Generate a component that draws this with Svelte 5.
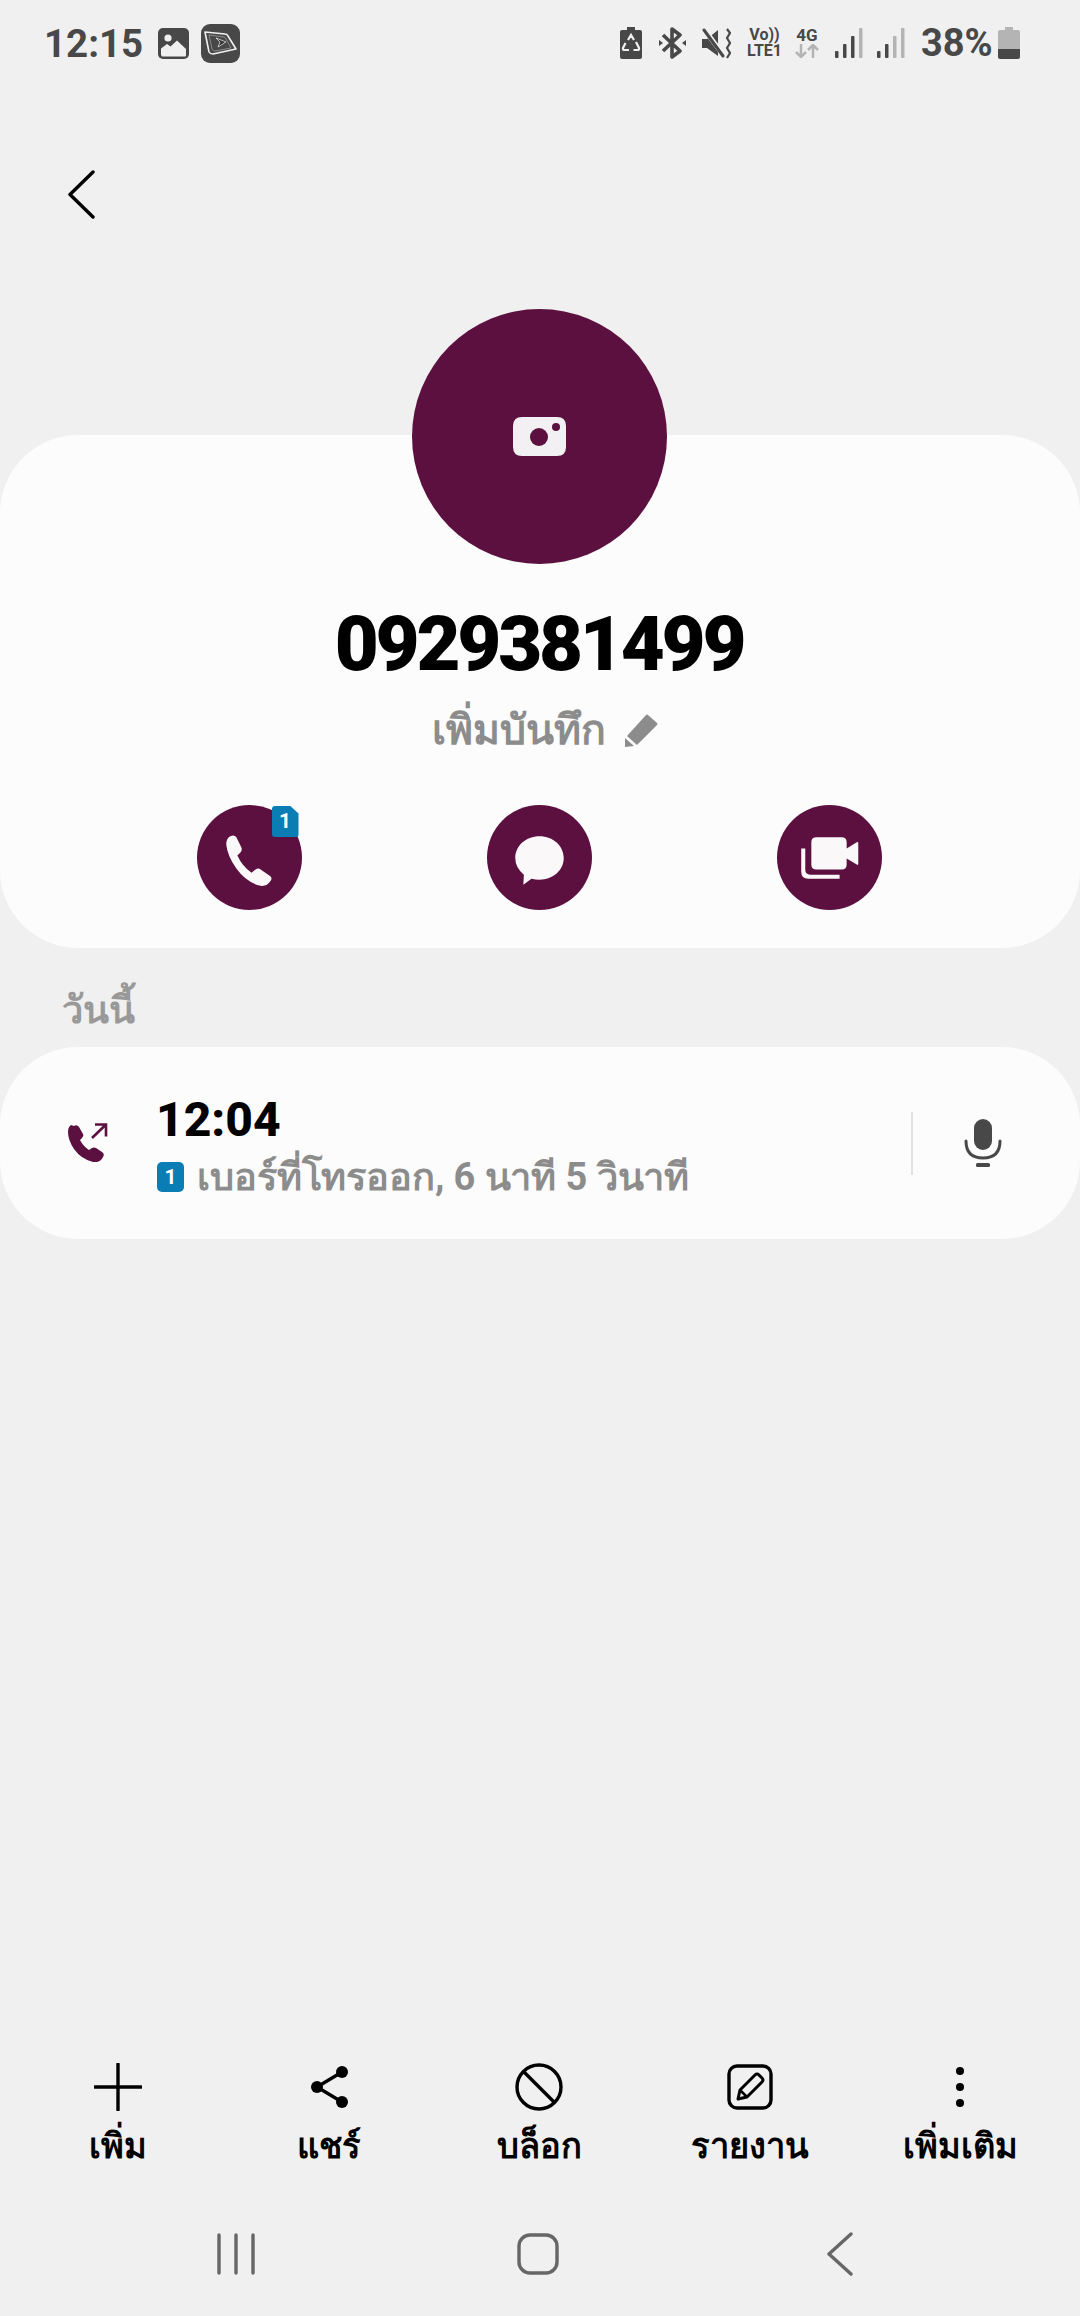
<script>
  const actions = ['phone', 'message', 'video'];
  const tools = [
    { id: 'add', label: 'เพิ่ม' },
    { id: 'share', label: 'แชร์' },
    { id: 'block', label: 'บล็อก' },
    { id: 'report', label: 'รายงาน' },
    { id: 'more', label: 'เพิ่มเติม' }
  ];
</script>

<div class="screen">
  <header class="status">
    <span class="clock">12:15</span>
    <svg class="notif-gallery" viewBox="0 0 31 31">
      <rect width="31" height="31" rx="5" fill="#484848" />
      <circle cx="10" cy="10" r="3.6" fill="#f0f0f0" />
      <path d="M3 27v-6.500l6 -4.500 3.500 2.500 6.500 -6 9 8.500v6.500q0 1 -1 1h-22.500q-1 0 -1 -1z" fill="#f0f0f0" />
    </svg>
    <svg class="notif-app" viewBox="0 0 39 39">
      <rect width="39" height="39" rx="9" fill="#484848" />
      <path d="M4 8l20 2q2 0 3 2l8 13 -23 5q-3 0 -4 -2z" fill="none" stroke="#f0f0f0" stroke-width="1.600" stroke-linejoin="round" />
      <path d="M8 11l15 2q1 0 2 2l5 9 -16 3q-2 0 -3 -2z" fill="none" stroke="#9a9a9a" stroke-width="0.800" />
      <path d="M15 14l10 4 -8 5 2 -5z" fill="#333" stroke="#f0f0f0" stroke-width="0.700" />
    </svg>

    <div class="status-right">
      <svg class="sys-batt" viewBox="0 0 22 32">
        <path d="M7 0h8v3h5q2 0 2 2v25q0 2 -2 2h-18q-2 0 -2 -2v-25q0 -2 2 -2h5z" fill="#484848" />
        <path d="M8 13l3 -5 3 5M16 15l3 6q.5 2 -1.500 2h-4M9 23h-4.500q-2 0 -1.500 -2l2.500 -5" fill="none" stroke="#f0f0f0" stroke-width="2.200" />
      </svg>
      <svg class="sys-bt" viewBox="0 0 27 32">
        <path d="M4 8l17 16 -8 6v-28l8 6 -17 16" fill="none" stroke="#484848" stroke-width="3.600" stroke-linejoin="round" />
        <path d="M0 13l4 3 -4 3zM27 13l-4 3 4 3z" fill="#484848" />
      </svg>
      <svg class="sys-mute" viewBox="0 0 29 32">
        <path d="M0 12h5l11 -9v26l-11 -8h-5z" fill="#484848" />
        <path d="M2 2l20 27" stroke="#f0f0f0" stroke-width="5" />
        <path d="M2 3l19 26" stroke="#484848" stroke-width="3" stroke-linecap="round" />
        <path d="M25 2l3 4 -3 5 3 5 -3 5 3 5 -3 5" fill="none" stroke="#484848" stroke-width="2.200" />
      </svg>
      <div class="volte"><span>Vo))</span><span>LTE1</span></div>
      <div class="net">
        <span>4G</span>
        <svg viewBox="0 0 24 14">
          <path d="M6 0v13M1 8l5 5 5 -5" fill="none" stroke="#b4b4b4" stroke-width="2.500" />
          <path d="M18 14v-13M13 6l5 -5 5 5" fill="none" stroke="#b4b4b4" stroke-width="2.500" />
        </svg>
      </div>
      <svg class="sys-signal" viewBox="0 0 28 32">
        <rect x="0" y="24" width="3.500" height="7" rx="1" fill="#484848" />
        <rect x="8" y="17" width="3.500" height="14" rx="1" fill="#484848" />
        <rect x="16" y="9" width="3.500" height="22" rx="1" fill="#484848" />
        <rect x="24" y="1" width="3.500" height="30" rx="1" fill="#b4b4b4" />
      </svg>
      <svg class="sys-signal second" viewBox="0 0 28 32">
        <rect x="0" y="24" width="3.500" height="7" rx="1" fill="#484848" />
        <rect x="8" y="17" width="3.500" height="14" rx="1" fill="#484848" />
        <rect x="16" y="9" width="3.500" height="22" rx="1" fill="#b4b4b4" />
        <rect x="24" y="1" width="3.500" height="30" rx="1" fill="#b4b4b4" />
      </svg>
      <span class="percent">38%</span>
      <svg class="sys-level" viewBox="0 0 22 32">
        <path d="M7 0h8v3h5q2 0 2 2v17h-22v-17q0 -2 2 -2h5z" fill="#b4b4b4" />
        <path d="M0 22h22v8q0 2 -2 2h-18q-2 0 -2 -2z" fill="#484848" />
      </svg>
    </div>
  </header>

  <div class="topbar">
    <svg class="back" viewBox="0 0 27 49">
      <path d="M25 2l-23 22.500 23 22.500" fill="none" stroke="#000" stroke-width="3.400" stroke-linecap="round" stroke-linejoin="round" />
    </svg>
  </div>

  <section class="profile card">
    <div class="avatar">
      <svg viewBox="0 0 53 39">
        <path d="M9 0h35q9 0 9 9v21q0 9 -9 9h-35q-9 0 -9 -9v-21q0 -9 9 -9z" fill="#f2f0f2" />
        <circle cx="26" cy="20" r="9" fill="#5c103f" />
        <circle cx="43" cy="10" r="4" fill="#5c103f" />
      </svg>
    </div>
    <h1 class="number">0929381499</h1>
    <div class="memo">
      <span>เพิ่มบันทึก</span>
      <svg viewBox="0 0 33 33">
        <path d="M23 1l9 8q1 1 0 2l-20 20 -10 -9 19 -21q1 -1 2 0z" fill="#8c8c8c" />
        <path d="M0 24l9 8 -9 1z" fill="#8c8c8c" />
      </svg>
    </div>
    <div class="actions">
      {#each actions as action}
        <div class="action">
          {#if action === 'phone'}
            <svg class="glyph" viewBox="0 0 104 104">
              <path d="M33 31q4 -2 6 1l5 10q1 3 -1 5l-3 3q5 11 14 17l4 -3q3 -2 5 0l9 6q3 2 1 5q-4 6 -10 5q-14 -3 -24 -17q-9 -13 -10 -24q0 -6 4 -8z" fill="#fbf8fa" />
            </svg>
            <span class="sim-tab">1</span>
          {:else if action === 'message'}
            <svg class="glyph" viewBox="0 0 104 104">
              <path d="M52 31c13.500 0 24 9.500 24 21.500s-10.500 21.500 -24 21.500q-4 0 -8 -1l-8 6 .5 -10q-8.500 -7 -8.500 -16.500c0 -12 10.500 -21.500 24 -21.500z" fill="#fbf8fa" />
            </svg>
          {:else}
            <svg class="glyph" viewBox="0 0 104 104">
              <path d="M24 43h4v21q0 5 5 5h29v4h-31q-7 0 -7 -7z" fill="#fbf8fa" />
              <path d="M39 32h25q5 0 5 5v6l10 -6q1.500 -1 1.500 1v20q0 2 -1.500 1l-10 -6v6q0 5 -5 5h-25q-5 0 -5 -5v-22q0 -5 5 -5z" fill="#fbf8fa" />
            </svg>
          {/if}
        </div>
      {/each}
    </div>
  </section>

  <h2 class="day">วันนี้</h2>

  <section class="log card">
    <svg class="call-out" viewBox="0 0 40 40">
      <path d="M6 4q3 -2 5 1l4 7q1 2 -1 4l-2 2q3 6 9 10l3 -2q2 -1 4 0l6 4q3 2 1 5q-3 6 -10 5q-12 -3 -19 -13q-6 -9 -6 -17q0 -5 3 -7z" fill="#5c103f" />
      <path d="M24 16l14 -13.500M27 2.500h11v12" fill="none" stroke="#5c103f" stroke-width="2.600" />
    </svg>
    <div class="log-text">
      <div class="log-time">12:04</div>
      <div class="log-sub">
        <span class="sim-chip">1</span>
        <span>เบอร์ที่โทรออก, 6 นาที 5 วินาที</span>
      </div>
    </div>
    <div class="divider"></div>
    <svg class="mic" viewBox="0 0 38 48">
      <rect x="10" y="0" width="18" height="31" rx="9" fill="#484848" />
      <path d="M2 22q0 17 17 17t17 -17" fill="none" stroke="#484848" stroke-width="3" stroke-linecap="round" />
      <rect x="12" y="44" width="14" height="4" rx="1.500" fill="#484848" />
    </svg>
  </section>

  <nav class="toolbar">
    {#each tools as tool}
      <div class="tool">
        <svg viewBox="0 0 48 48">
          {#if tool.id === 'add'}
            <path d="M24 1v46M1 24h46" stroke="#000" stroke-width="3.400" stroke-linecap="round" />
          {:else if tool.id === 'share'}
            <path d="M37 9l-25 15 25 15" fill="none" stroke="#000" stroke-width="3.400" />
            <circle cx="37" cy="9" r="6" />
            <circle cx="12" cy="24" r="6" />
            <circle cx="37" cy="39" r="6" />
          {:else if tool.id === 'block'}
            <circle cx="24" cy="24" r="22" fill="none" stroke="#000" stroke-width="3.400" />
            <path d="M8 8l32 32" stroke="#000" stroke-width="3.400" />
          {:else if tool.id === 'report'}
            <rect x="3" y="3" width="42" height="42" rx="8" fill="none" stroke="#000" stroke-width="3.400" />
            <path d="M12 36l2 -9 15 -15q2 -2 4 0l3 3q2 2 0 4l-15 15z" fill="none" stroke="#000" stroke-width="3" stroke-linejoin="round" />
            <path d="M14 27l7 7" stroke="#000" stroke-width="2.500" />
          {:else}
            <circle cx="24" cy="8" r="4" />
            <circle cx="24" cy="24" r="4" />
            <circle cx="24" cy="40" r="4" />
          {/if}
        </svg>
        <span>{tool.label}</span>
      </div>
    {/each}
  </nav>

  <footer class="navbar">
    <svg viewBox="0 0 38 42">
      <path d="M2 2v38M19 2v38M36 2v38" stroke="#666" stroke-width="3.400" stroke-linecap="round" />
    </svg>
    <svg viewBox="0 0 42 42">
      <rect x="2" y="2" width="38" height="38" rx="11" fill="none" stroke="#666" stroke-width="3.400" />
    </svg>
    <svg viewBox="0 0 26 44">
      <path d="M24 2l-22 20 22 20" fill="none" stroke="#666" stroke-width="3.400" stroke-linecap="round" stroke-linejoin="round" />
    </svg>
  </footer>
</div>

<style>
  :global(body) {
    margin: 0;
    background: #f0f0f0;
  }

  .screen {
    width: 1080px;
    height: 2316px;
    display: flex;
    flex-direction: column;
    background: #f0f0f0;
    font-family: Roboto, "Noto Sans", sans-serif;
    overflow: hidden;
  }

  /* status bar */
  .status {
    height: 87px;
    padding: 24px 60px 0 44px;
    box-sizing: border-box;
    display: flex;
    align-items: flex-start;
    color: #484848;
  }

  .clock {
    font-size: 38.5px;
    font-weight: 700;
    line-height: 39px;
    width: 97px;
    margin-right: 17px;
  }

  .notif-gallery {
    width: 31px;
    height: 31px;
    margin: 4px 12px 0 0;
  }

  .notif-app {
    width: 39px;
    height: 39px;
  }

  .status-right {
    margin-left: auto;
    display: flex;
    align-items: flex-start;
    padding-top: 3px;
  }

  .sys-batt,
  .sys-level {
    width: 22px;
    height: 32px;
  }

  .sys-bt {
    width: 27px;
    height: 32px;
    margin-left: 17px;
  }

  .sys-mute {
    width: 29px;
    height: 32px;
    margin-left: 16px;
  }

  .volte {
    width: 39px;
    margin-left: 14px;
    display: flex;
    flex-direction: column;
    align-items: center;
    font-size: 16px;
    font-weight: 700;
    line-height: 16px;
    white-space: nowrap;
  }

  .net {
    width: 24px;
    margin-left: 11px;
    font-size: 17px;
    font-weight: 700;
    line-height: 17px;
    text-align: center;
  }

  .net svg {
    display: block;
    width: 24px;
    height: 14px;
  }

  .sys-signal {
    width: 28px;
    height: 32px;
    margin-left: 16px;
  }

  .sys-signal.second {
    margin-left: 14px;
  }

  .percent {
    width: 71px;
    margin: 0 6px 0 16px;
    font-size: 38px;
    font-weight: 700;
    line-height: 32px;
    white-space: nowrap;
  }

  /* back button */
  .topbar {
    height: 348px;
    padding: 83px 0 0 68px;
    box-sizing: border-box;
  }

  .back {
    display: block;
    width: 27px;
    height: 49px;
  }

  .card {
    background: #fcfcfc;
    border-radius: 78px;
  }

  .profile {
    height: 513px;
    padding-right: 2px;
    display: flex;
    flex-direction: column;
    align-items: center;
    box-sizing: border-box;
  }

  .avatar {
    width: 255px;
    height: 255px;
    margin-top: -126px;
    border-radius: 50%;
    background: #5c103f;
    display: flex;
    align-items: center;
    justify-content: center;
    flex: none;
  }

  .avatar svg {
    width: 53px;
    height: 39px;
  }

  .number {
    margin: 37px 0 0;
    font-size: 76px;
    font-weight: 900;
    letter-spacing: -3.2px;
    line-height: 86px;
    color: #000;
  }

  .memo {
    margin: 15px 0 0 12px;
    display: flex;
    align-items: center;
    gap: 19px;
    font-size: 41px;
    font-weight: 700;
    line-height: 56px;
    color: #8c8c8c;
  }

  .memo svg {
    width: 33px;
    height: 33px;
  }

  .actions {
    margin-top: 47px;
    display: grid;
    grid-template-columns: repeat(3, 290px);
    justify-items: center;
  }

  .action {
    position: relative;
    width: 105px;
    height: 105px;
    border-radius: 50%;
    background: #5c103f;
  }

  .glyph {
    display: block;
    width: 105px;
    height: 105px;
  }

  .sim-tab {
    position: absolute;
    top: 1px;
    left: 75px;
    width: 27px;
    height: 31px;
    background: #0a7db5;
    border-radius: 3px;
    clip-path: polygon(0 0, 70% 0, 100% 24%, 100% 100%, 0 100%);
    color: #fff;
    font-size: 21px;
    font-weight: 700;
    line-height: 31px;
    text-align: center;
  }

  .day {
    margin: 32px 0 0 62px;
    height: 67px;
    font-size: 38px;
    font-weight: 800;
    line-height: 60px;
    color: #999;
  }

  .log {
    height: 192px;
    display: flex;
    align-items: center;
    padding: 0 78px 0 68px;
    box-sizing: border-box;
  }

  .call-out {
    width: 40px;
    height: 40px;
    margin-top: -2px;
  }

  .log-text {
    margin-left: 49px;
    flex: 1;
    padding-top: 10px;
  }

  .log-time {
    font-size: 48px;
    font-weight: 800;
    line-height: 56px;
    margin-left: -1px;
    color: #000;
  }

  .log-sub {
    display: flex;
    align-items: center;
    gap: 13px;
    font-size: 38px;
    font-weight: 700;
    line-height: 56px;
    color: #8c8c8c;
    letter-spacing: -0.1px;
    padding-top: 1px;
  }

  .sim-chip {
    width: 27px;
    height: 30px;
    border-radius: 5px;
    background: #0a7db5;
    color: #fff;
    font-size: 21px;
    line-height: 30px;
    text-align: center;
  }

  .divider {
    width: 2px;
    height: 63px;
    background: #e2e2e2;
    margin-right: 51px;
  }

  .mic {
    width: 38px;
    height: 48px;
  }

  /* bottom toolbar */
  .toolbar {
    margin-top: auto;
    margin-bottom: 18px;
    display: grid;
    grid-template-columns: repeat(5, 210.5px);
    padding-left: 13px;
  }

  .tool {
    display: flex;
    flex-direction: column;
    align-items: center;
    color: #000;
    font-size: 34.5px;
    font-weight: 800;
    line-height: 56px;
    white-space: nowrap;
  }

  .tool svg {
    width: 48px;
    height: 48px;
    margin-bottom: 7px;
  }

  .navbar {
    height: 124px;
    padding: 0 85px;
    display: grid;
    grid-template-columns: repeat(3, 302px);
    justify-items: center;
    align-items: center;
  }

  .navbar svg:nth-child(1) {
    width: 38px;
    height: 42px;
  }

  .navbar svg:nth-child(2) {
    width: 42px;
    height: 42px;
  }

  .navbar svg:nth-child(3) {
    width: 26px;
    height: 44px;
  }
</style>
